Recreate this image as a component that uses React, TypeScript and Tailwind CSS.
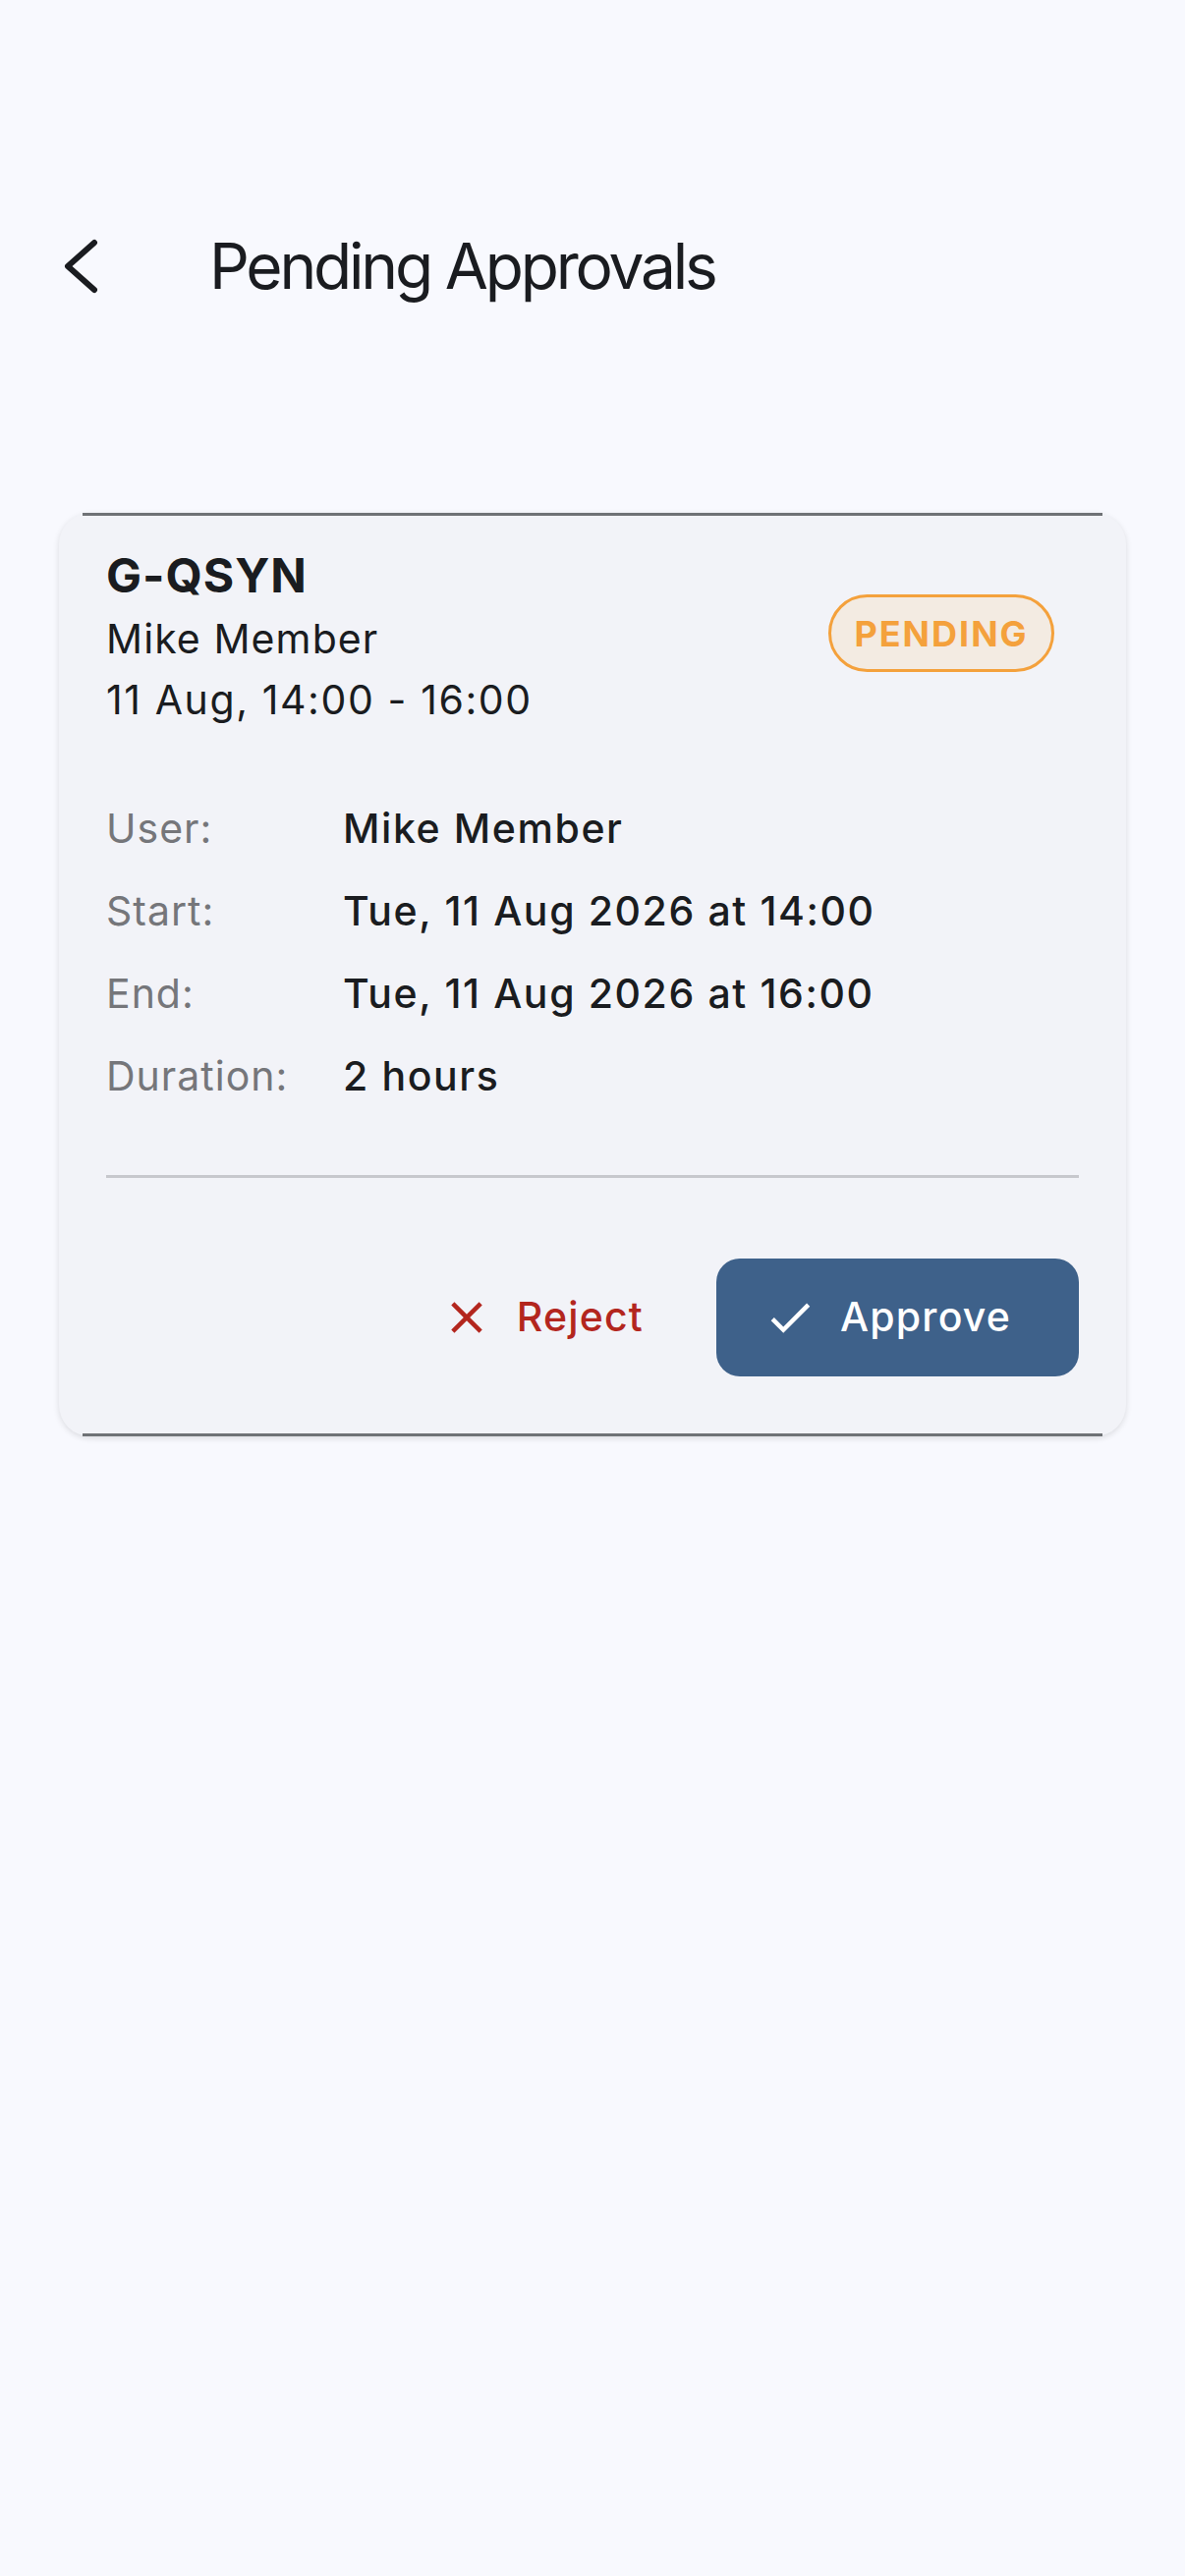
import React from 'react';

const rows = [
    { label: 'User:', value: 'Mike Member' },
    { label: 'Start:', value: 'Tue, 11 Aug 2026 at 14:00' },
    { label: 'End:', value: 'Tue, 11 Aug 2026 at 16:00' },
    { label: 'Duration:', value: '2 hours' },
];

function CheckIcon() {
    return (
        <svg viewBox="0 0 24 24" className="h-[54px] w-[54px] shrink-0" fill="currentColor">
            <path d="M9 16.17L4.83 12l-1.42 1.41L9 19 21 7l-1.41-1.41z" />
        </svg>
    );
}

function CloseIcon() {
    return (
        <svg viewBox="0 0 24 24" className="h-[54px] w-[54px] shrink-0" fill="currentColor">
            <path d="M19 6.41L17.59 5 12 10.59 6.41 5 5 6.41 10.59 12 5 17.59 6.41 19 12 13.41 17.59 19 19 17.59 13.41 12z" />
        </svg>
    );
}

export default function App() {
    return (
        <div className="min-h-[2622px] bg-[#f8f9fe] pt-[231px] font-['Inter','Noto_Sans',sans-serif] text-[#1a1c20]">
            {/* top bar */}
            <div className="flex h-[80px] items-center pl-[64px]">
                <svg width="40" height="60" viewBox="0 0 40 60" fill="none" className="shrink-0">
                    <polyline
                        points="32,6 5,30 32,54"
                        stroke="#1a1c20"
                        strokeWidth="6"
                        strokeLinecap="round"
                        strokeLinejoin="round"
                    />
                </svg>
                <h1 className="ml-[109px] text-[64px] leading-[80px] font-normal tracking-[-3.2px]">Pending Approvals</h1>
            </div>

            {/* approval card */}
            <div className="relative mx-[60px] mt-[211px] rounded-[32px] bg-[#f2f3f8] px-12 pt-9 pb-[61px] tracking-[1.4px] shadow-[0_2px_6px_rgba(0,0,0,0.12)]">
                <div className="absolute top-0 right-[24px] left-[24px] h-[3px] bg-[#6f7276]" />
                <div className="absolute right-[24px] bottom-0 left-[24px] h-[3px] bg-[#6f7276]" />

                <div className="flex items-start justify-between">
                    <div>
                        <div className="text-[48px] leading-[56px] font-bold tracking-[1px]">G-QSYN</div>
                        <div className="mt-[5px] text-[41px] leading-[62px] tracking-[1.1px]">Mike Member</div>
                        <div className="text-[41px] leading-[62px] tracking-[1.6px]">11 Aug, 14:00 - 16:00</div>
                    </div>
                    <span className="mt-[47px] mr-[25px] flex h-[79px] w-[230px] items-center justify-center rounded-full border-[3px] border-[#f4a13c] bg-[#f3ebe2] text-[36px] font-bold tracking-[2px] text-[#f4a13c]">
                        PENDING
                    </span>
                </div>

                <div className="mt-[58px]">
                    {rows.map((row) => (
                        <div key={row.label} className="flex h-[84px] text-[41px] leading-[84px]">
                            <span className="w-[241px] shrink-0 tracking-[1px] text-[#75767a]">{row.label}</span>
                            <span className="font-medium tracking-[1.6px]">{row.value}</span>
                        </div>
                    ))}
                </div>

                <div className="mt-[59px] h-[3px] bg-[#c7c8cd]" />

                <div className="mt-[82px] flex justify-end gap-[26px]">
                    <button className="flex h-[120px] items-center gap-6 rounded-[24px] pr-12 pl-9 text-[41px] font-medium tracking-[1.2px] text-[#b3261e]">
                        <CloseIcon />
                        Reject
                    </button>
                    <button className="flex h-[120px] w-[369px] items-center gap-6 rounded-[24px] bg-[#3e618a] pl-12 text-[41px] font-medium tracking-[1.2px] text-white">
                        <CheckIcon />
                        Approve
                    </button>
                </div>
            </div>
        </div>
    );
}
